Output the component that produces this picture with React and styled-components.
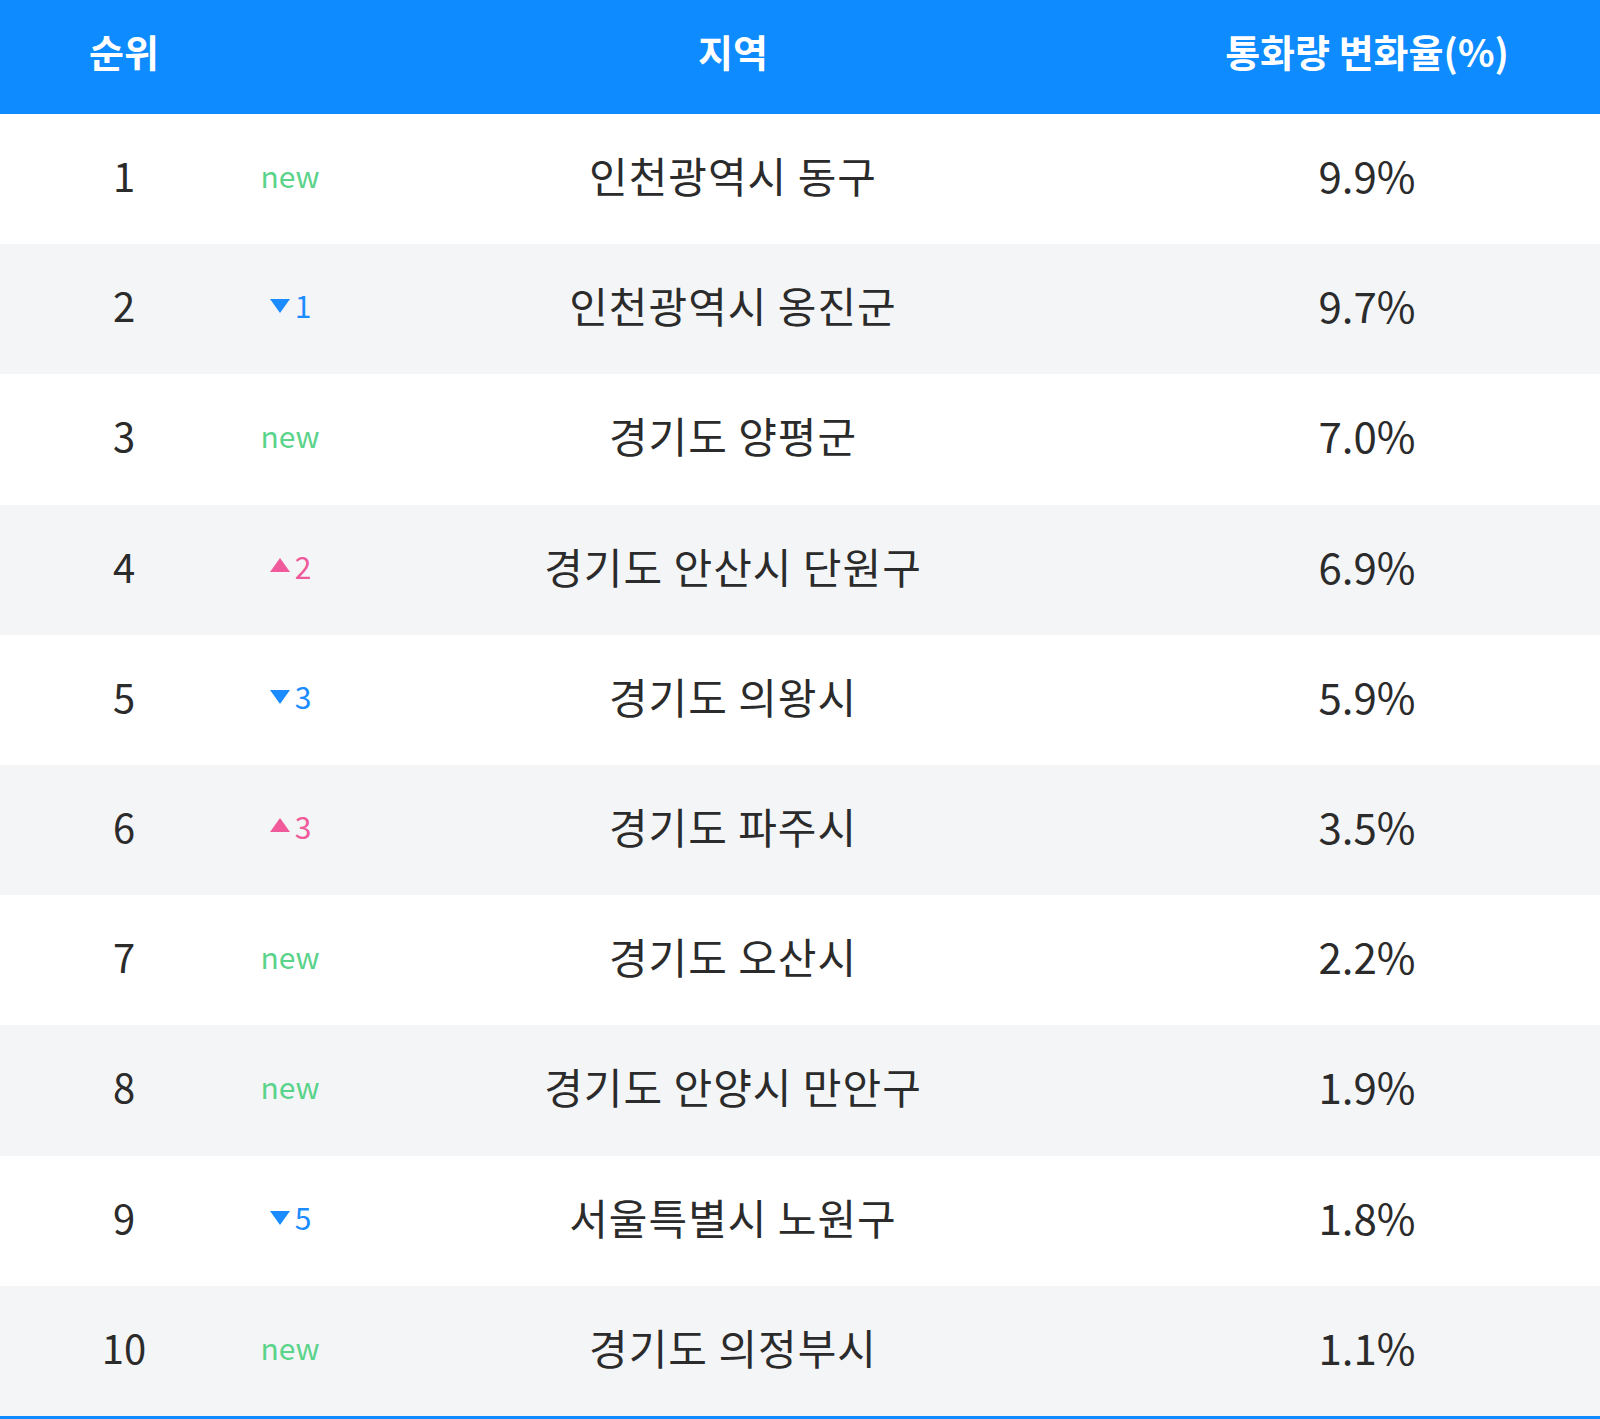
import React from "react";
import styled, { createGlobalStyle } from "styled-components";

const Global = createGlobalStyle`
  html, body { margin: 0; padding: 0; background: #ffffff; }
  body { font-family: "Noto Sans CJK KR", "Noto Sans", sans-serif; }
`;

const Table = styled.div`
  width: 1600px;
  border-bottom: 3px solid #0d8bff;
`;

const cols = "248px 84px 1fr 466px";

const HeaderRow = styled.div`
  display: grid;
  grid-template-columns: ${cols};
  height: 114px;
  box-sizing: border-box;
  padding-bottom: 12px;
  align-items: center;
  background: #0d8bff;
  color: #ffffff;
  font-size: 38px;
  font-weight: 700;
`;

const HeadCell = styled.div`
  text-align: center;
  line-height: 1;
`;

const Row = styled.div`
  display: grid;
  grid-template-columns: ${cols};
  height: 130.2px;
  box-sizing: border-box;
  padding-bottom: 8px;
  align-items: center;
  background: ${(p) => (p.$alt ? "#f4f5f7" : "#ffffff")};
  color: #2b2b2b;
`;

const Cell = styled.div`
  text-align: center;
  font-size: ${(p) => p.$size || 40}px;
  letter-spacing: ${(p) => p.$spacing || 0}px;
  line-height: 1;
`;

const Change = styled.div`
  display: flex;
  justify-content: center;
  align-items: center;
  gap: 4px;
  font-size: 30px;
  line-height: 1;
  color: ${(p) => p.$color};
`;

const Tri = styled.svg`
  width: 22px;
  height: 18px;
  display: block;
`;

const COLORS = { new: "#5ad38b", up: "#f05a9a", down: "#1a8cff" };

function ChangeMark({ type, n }) {
  if (type === "new") return <Change $color={COLORS.new}>new</Change>;
  return (
    <Change $color={COLORS[type]}>
      <Tri viewBox="0 0 22 18">
        {type === "down" ? (
          <polygon points="1,3 21,3 11,17" fill={COLORS.down} />
        ) : (
          <polygon points="1,15 21,15 11,1" fill={COLORS.up} />
        )}
      </Tri>
      <span>{n}</span>
    </Change>
  );
}

const data = [
  [1, "new", null, "인천광역시 동구", "9.9%"],
  [2, "down", 1, "인천광역시 옹진군", "9.7%"],
  [3, "new", null, "경기도 양평군", "7.0%"],
  [4, "up", 2, "경기도 안산시 단원구", "6.9%"],
  [5, "down", 3, "경기도 의왕시", "5.9%"],
  [6, "up", 3, "경기도 파주시", "3.5%"],
  [7, "new", null, "경기도 오산시", "2.2%"],
  [8, "new", null, "경기도 안양시 만안구", "1.9%"],
  [9, "down", 5, "서울특별시 노원구", "1.8%"],
  [10, "new", null, "경기도 의정부시", "1.1%"],
];

export default function App() {
  return (
    <>
      <Global />
      <Table>
        <HeaderRow>
          <HeadCell>순위</HeadCell>
          <HeadCell />
          <HeadCell>지역</HeadCell>
          <HeadCell>통화량 변화율(%)</HeadCell>
        </HeaderRow>
        {data.map(([rank, type, n, region, val], i) => (
          <Row key={rank} $alt={i % 2 === 1}>
            <Cell>{rank}</Cell>
            <ChangeMark type={type} n={n} />
            <Cell $size={42} $spacing={1}>{region}</Cell>
            <Cell $size={42}>{val}</Cell>
          </Row>
        ))}
      </Table>
    </>
  );
}
